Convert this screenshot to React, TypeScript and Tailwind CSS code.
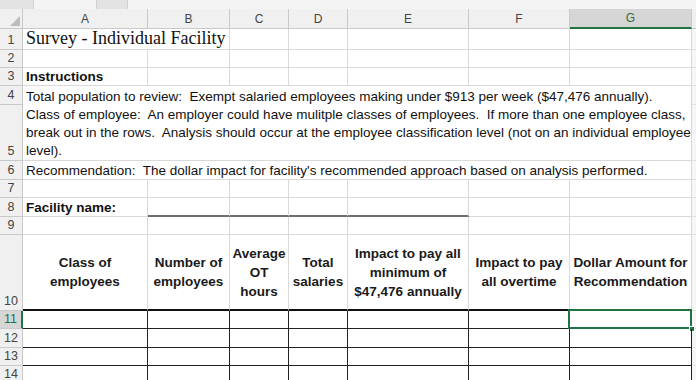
import React from "react";

const font = { fontFamily: '"Liberation Sans", Arial, sans-serif' };

// light gridline cell
const g = "border-r border-b border-[#d9d9d9]";
// row number cell
const rh =
  "flex items-end justify-center pb-px border-r border-b border-[#c9c9c9] bg-[#f0f0f0] text-[12.5px] leading-[15px] text-[#444]";
// thin 4px strip on the right (next column)
const edge = "border-b border-[#e2e2e2] bg-[#f6f6f6]";
// ruled table body cell
const t = "border-r border-b border-[#222]";

function ColHead({ label, active }: { label: string; active?: boolean }) {
  return (
    <div
      className={
        active
          ? "flex items-center justify-center border-r border-[#c9c9c9] border-b-2 border-b-[#217346] bg-[#d6d6d6] text-[12px] text-[#2f6b47]"
          : "flex items-center justify-center border-r border-b border-[#c9c9c9] bg-[#f0f0f0] text-[12px] text-[#444]"
      }
    >
      {label}
    </div>
  );
}

function EmptyRow({ n }: { n: number }) {
  return (
    <>
      <div className={rh}>{n}</div>
      <div className={g} />
      <div className={g} />
      <div className={g} />
      <div className={g} />
      <div className={g} />
      <div className={g} />
      <div className={g} />
      <div className={edge} />
    </>
  );
}

function TableRow({ n, selected }: { n: number; selected?: boolean }) {
  return (
    <>
      <div
        className={
          selected
            ? "flex items-end justify-center pb-px border-r-2 border-r-[#217346] border-b border-[#c9c9c9] bg-[#d6d6d6] text-[12.5px] leading-[15px] text-[#217346]"
            : rh
        }
      >
        {n}
      </div>
      <div className={t} />
      <div className={t} />
      <div className={t} />
      <div className={t} />
      <div className={t} />
      <div className={t} />
      <div className={`${t} relative`}>
        {selected && (
          <>
            <div className="absolute -left-[2px] -top-[2px] -right-px -bottom-px border-2 border-[#217346]" />
            <div className="absolute -right-[4px] -bottom-[4px] w-[6px] h-[6px] bg-[#217346] border border-white" />
          </>
        )}
      </div>
      <div className={edge} />
    </>
  );
}

function Head({ children }: { children: React.ReactNode }) {
  return (
    <div className="flex items-center justify-center text-center border-r border-[#d9d9d9] border-b-2 border-b-[#111] text-[13.5px] font-bold leading-[19px] text-[#1a1a1a]">
      {children}
    </div>
  );
}

export default function App() {
  return (
    <div className="w-[696px] h-[380px] overflow-hidden bg-white" style={font}>
      {/* bottom edge of formula bar */}
      <div className="flex h-[9px] bg-[#e3e3e3]">
        <div className="w-[33px]" />
        <div className="w-[64px] bg-[#f4f4f4] border-x border-[#d0d0d0]" />
        <div className="w-[30px]" />
        <div className="flex-1 bg-[#f4f4f4] border-l border-[#d0d0d0]" />
      </div>

      <div className="grid grid-cols-[23px_125px_82px_59px_59px_121px_101px_122px_4px] grid-rows-[20px_21px_18px_18px_19px_56px_19px_18px_19px_18px_76px_18px_19px_18px_18px]">
        {/* column letters */}
        <div className="relative border-r border-b border-[#c9c9c9] bg-[#f0f0f0]">
          <svg className="absolute right-[2px] bottom-[2px]" width="10" height="10" viewBox="0 0 10 10">
            <polygon points="10,0 10,10 0,10" fill="#bdbdbd" />
          </svg>
        </div>
        <ColHead label="A" />
        <ColHead label="B" />
        <ColHead label="C" />
        <ColHead label="D" />
        <ColHead label="E" />
        <ColHead label="F" />
        <ColHead label="G" active />
        <div className="border-b border-[#c9c9c9] bg-[#f0f0f0]" />

        {/* 1 */}
        <div className={rh}>1</div>
        <div
          className={`${g} col-span-2 flex items-end pl-[3px] text-[18px] leading-[21px] text-[#111]`}
          style={{ fontFamily: '"Liberation Serif", "Times New Roman", serif' }}
        >
          Survey - Individual Facility
        </div>
        <div className={g} />
        <div className={g} />
        <div className={g} />
        <div className={g} />
        <div className={g} />
        <div className={edge} />

        <EmptyRow n={2} />

        {/* 3 */}
        <div className={rh}>3</div>
        <div className={`${g} flex items-end pl-[3px] text-[13.5px] font-bold leading-[17px] text-[#111]`}>
          Instructions
        </div>
        <div className={g} />
        <div className={g} />
        <div className={g} />
        <div className={g} />
        <div className={g} />
        <div className={g} />
        <div className={edge} />

        {/* 4 */}
        <div className={rh}>4</div>
        <div className="col-span-7 flex items-end whitespace-pre pl-[3px] border-r border-[#d9d9d9] text-[13.5px] leading-[17px] text-[#111]">
          Total population to review:  Exempt salaried employees making under $913 per week ($47,476 annually).
        </div>
        <div className={edge} />

        {/* 5 */}
        <div className={rh}>5</div>
        <div className="col-span-7 flex flex-col justify-end whitespace-pre pl-[3px] border-r border-b border-[#d9d9d9] text-[13.5px] leading-[18px] text-[#111]">
          <span>Class of employee:  An employer could have mulitple classes of employees.  If more than one employee class,</span>
          <span>break out in the rows.  Analysis should occur at the employee classification level (not on an individual employee</span>
          <span>level).</span>
        </div>
        <div className={edge} />

        {/* 6 */}
        <div className={rh}>6</div>
        <div className="col-span-7 flex items-end whitespace-pre pl-[3px] border-r border-b border-[#d9d9d9] text-[13.5px] leading-[17px] text-[#111]">
          Recommendation:  The dollar impact for facility's recommended approach based on analysis performed.
        </div>
        <div className={edge} />

        <EmptyRow n={7} />

        {/* 8 */}
        <div className={rh}>8</div>
        <div className={`${g} flex items-end pl-[3px] text-[13.5px] font-bold leading-[17px] text-[#111]`}>
          Facility name:
        </div>
        <div className="border-r border-[#d9d9d9] border-b-2 border-b-[#6e6e6e]" />
        <div className="border-r border-[#d9d9d9] border-b-2 border-b-[#6e6e6e]" />
        <div className="border-r border-[#d9d9d9] border-b-2 border-b-[#6e6e6e]" />
        <div className="border-r border-[#d9d9d9] border-b-2 border-b-[#6e6e6e]" />
        <div className={g} />
        <div className={g} />
        <div className={edge} />

        <EmptyRow n={9} />

        {/* 10 */}
        <div className={rh}>10</div>
        <Head>
          Class of
          <br />
          employees
        </Head>
        <Head>
          Number of
          <br />
          employees
        </Head>
        <Head>
          Average
          <br />
          OT
          <br />
          hours
        </Head>
        <Head>
          Total
          <br />
          salaries
        </Head>
        <Head>
          Impact to pay all
          <br />
          minimum of
          <br />
          $47,476 annually
        </Head>
        <Head>
          Impact to pay
          <br />
          all overtime
        </Head>
        <Head>
          Dollar Amount for
          <br />
          Recommendation
        </Head>
        <div className={edge} />

        <TableRow n={11} selected />
        <TableRow n={12} />
        <TableRow n={13} />
        <TableRow n={14} />
      </div>
    </div>
  );
}
